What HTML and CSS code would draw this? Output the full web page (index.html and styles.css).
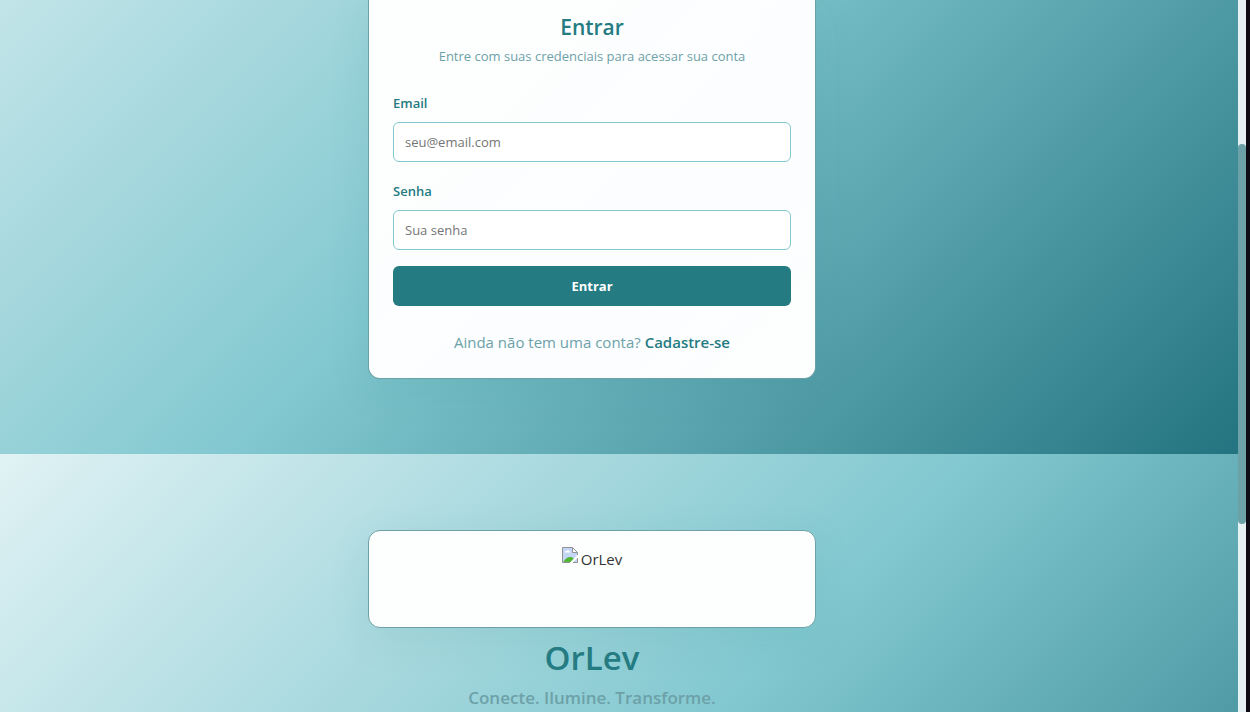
FILE: index.html
```html
<!DOCTYPE html>
<html lang="pt-BR">
<head>
<meta charset="utf-8">
<meta name="viewport" content="width=device-width, initial-scale=1">
<title>OrLev - Entrar</title>
<link rel="stylesheet" href="styles.css">
</head>
<body>
<main class="page">
  <section class="screen screen-login">
    <div class="card login">
      <header class="login-header">
        <h2 class="login-title">Entrar</h2>
        <p class="login-text">Entre com suas credenciais para acessar sua conta</p>
      </header>
      <form class="form">
        <div class="field">
          <label class="label" for="email">Email</label>
          <input class="input" id="email" type="email" placeholder="seu@email.com">
        </div>
        <div class="field">
          <label class="label" for="senha">Senha</label>
          <input class="input" id="senha" type="password" placeholder="Sua senha">
        </div>
        <button class="submit" type="submit">Entrar</button>
      </form>
      <p class="signup">Ainda não tem uma conta? <a class="signup-link" href="#cadastro">Cadastre-se</a></p>
    </div>
  </section>
  <section class="screen screen-brand">
    <div class="card brand-card">
      <svg class="brand-icon" width="16" height="16" viewBox="0 0 16 16" aria-hidden="true">
        <path d="M.5 .5H10.5L15.5 5.5V15.5H.5Z" fill="#c4d6f6"/>
        <path d="M2.500 5.500C2.500 4.500 3.500 4 4.300 4.200C4.700 2.800 6.800 2.800 7.200 4.200C8.200 4 8.500 5 8.300 5.500Z" fill="#fff"/>
        <path d="M1 15.500C3 11.500 6 9.500 9 10C11 10.300 12 11.500 12.500 15.500Z" fill="#54b435"/>
        <path d="M16 7.500V10.500L10.500 16H7.500Z" fill="#fff"/>
        <path d="M10.500 .5V5.500H15.500Z" fill="#fff"/>
        <path d="M8 15.500H.5V.5H10.500L15.500 5.500V8M10.500 .5V5.500H15.500M15.500 11V15.500H11" fill="none" stroke="#939393"/>
      </svg>
      <span>OrLev</span>
    </div>
    <h1 class="brand-name">OrLev</h1>
    <p class="brand-tagline">Conecte. Ilumine. Transforme.</p>
  </section>
</main>
<div class="scrollbar" aria-hidden="true"><div class="thumb"></div></div>
</body>
</html>
```

FILE: styles.css
```css
:root {
  --teal: #247b82;
  --muted: #6da1a8;
  --aqua: #82c8d0;
}

* { box-sizing: border-box; }

body {
  margin: 0;
  height: 100vh;
  overflow: hidden;
  display: flex;
  background: #0f0b14;
  border-right: 4px solid #0f0b14;
  font-family: "Open Sans", "Noto Sans", sans-serif;
  font-size: 15px;
  line-height: 24px;
  color: #333;
}

h1, h2, p { margin: 0; }

.page {
  flex: 1;
  min-width: 0;
  overflow: hidden;
}

.screen {
  display: flex;
  flex-direction: column;
  align-items: center;
  padding: 0 70px 75px 16px;
  background: linear-gradient(135deg, #e0f2f4 0%, var(--aqua) 50%, #237480 100%) no-repeat;
  background-size: 100% 712px;
}

.screen-login {
  background-position: bottom;
  background-size: 100% 780px;
}

.screen-brand {
  padding-top: 76px;
  background-position: top;
}

.card {
  width: 100%;
  max-width: 448px;
  border: 1px solid var(--muted);
  border-radius: 12px;
  background: #fdfffe;
  box-shadow: 0 10px 40px rgba(36, 123, 130, 0.1);
}

.login {
  padding: 10px 24px 24px;
  border-top: 0;
  border-radius: 0 0 12px 12px;
  background: linear-gradient(135deg, #fdfffe, #fcfdff 70%, #fdfffe);
}

.login-header { text-align: center; }

.login-title {
  font-size: 21px;
  line-height: 34px;
  font-weight: 600;
  color: var(--teal);
}

.login-text {
  font-size: 13px;
  color: var(--muted);
}

.form {
  display: grid;
  gap: 16px;
  padding-top: 22px;
}

.field {
  display: grid;
  gap: 8px;
}

.label {
  padding-top: 2px;
  font-size: 13px;
  line-height: 22px;
  font-weight: 600;
  color: var(--teal);
}

.input {
  width: 100%;
  height: 40px;
  padding: 0 11px;
  border: 1px solid var(--aqua);
  border-radius: 6px;
  background: #fff;
  font: inherit;
  font-size: 13px;
}

.input::placeholder { color: #757575; }

.submit {
  height: 40px;
  border: 0;
  border-radius: 6px;
  background: var(--teal);
  color: #fff;
  font: inherit;
  font-size: 13px;
  font-weight: 700;
}

.signup {
  padding-top: 24px;
  text-align: center;
  color: var(--muted);
}

.signup-link {
  color: var(--teal);
  font-weight: 600;
  text-decoration: none;
}

.brand-card {
  display: flex;
  justify-content: center;
  align-items: flex-start;
  gap: 3px;
  height: 98px;
  padding: 16px;
}

.brand-name {
  padding-top: 8px;
  font-size: 33px;
  line-height: 44px;
  font-weight: 600;
  color: var(--teal);
}

.brand-tagline {
  padding-top: 4px;
  font-size: 17px;
  line-height: 28px;
  font-weight: 600;
  color: var(--muted);
}

.scrollbar {
  display: grid;
  grid-template-rows: 144fr 380fr 188fr;
  width: 8px;
  background: #e6f1f3;
}

.thumb {
  grid-row: 2;
  border-radius: 4px;
  background: var(--muted);
}
```
